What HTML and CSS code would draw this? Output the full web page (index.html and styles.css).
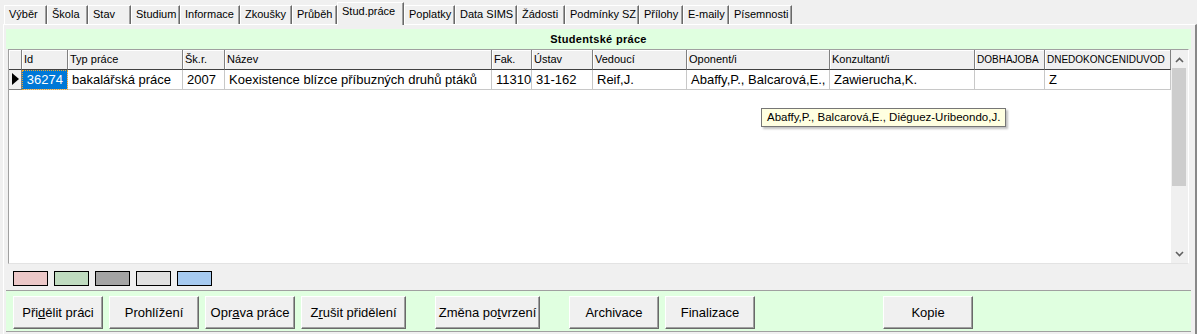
FILE: index.html
```html
<!DOCTYPE html>
<html lang="cs">
<head>
  <meta charset="UTF-8">
  <title>Studentské práce</title>
  <link rel="stylesheet" href="styles.css">
</head>
<body>
  <div class="tabs">
    <div class="tab">Výběr</div>
    <div class="tab">Škola</div>
    <div class="tab">Stav</div>
    <div class="tab">Studium</div>
    <div class="tab">Informace</div>
    <div class="tab">Zkoušky</div>
    <div class="tab">Průběh</div>
    <div class="tab active">Stud.práce</div>
    <div class="tab">Poplatky</div>
    <div class="tab">Data SIMS</div>
    <div class="tab">Žádosti</div>
    <div class="tab">Podmínky SZ</div>
    <div class="tab">Přílohy</div>
    <div class="tab">E-maily</div>
    <div class="tab">Písemnosti</div>
  </div>

  <div class="panel">
    <div class="caption">Studentské práce</div>

    <div class="grid">
      <div class="grid-table">
        <div class="grid-row head">
          <div class="cell ind"></div>
          <div class="cell">Id</div>
          <div class="cell">Typ práce</div>
          <div class="cell">Šk.r.</div>
          <div class="cell">Název</div>
          <div class="cell">Fak.</div>
          <div class="cell">Ústav</div>
          <div class="cell">Vedoucí</div>
          <div class="cell">Oponent/i</div>
          <div class="cell">Konzultant/i</div>
          <div class="cell caps">DOBHAJOBA</div>
          <div class="cell caps">DNEDOKONCENIDUVOD</div>
        </div>
        <div class="grid-row data">
          <div class="cell ind">
            <svg width="7" height="12" viewBox="0 0 7 12"><polygon points="0,0 7,6 0,12" fill="#000"/></svg>
          </div>
          <div class="cell num selected">36274</div>
          <div class="cell">bakalářská práce</div>
          <div class="cell">2007</div>
          <div class="cell">Koexistence blízce příbuzných druhů ptáků</div>
          <div class="cell">11310</div>
          <div class="cell">31-162</div>
          <div class="cell">Reif,J.</div>
          <div class="cell">Abaffy,P., Balcarová,E.,</div>
          <div class="cell">Zawierucha,K.</div>
          <div class="cell"></div>
          <div class="cell">Z</div>
        </div>
      </div>
      <div class="scrollbar">
        <div class="sb-btn">
          <svg width="9" height="6" viewBox="0 0 9 6"><polyline points="1,5 4.5,1.5 8,5" fill="none" stroke="#606060" stroke-width="1.6"/></svg>
        </div>
        <div class="sb-track"><div class="sb-thumb"></div></div>
        <div class="sb-btn down">
          <svg width="9" height="6" viewBox="0 0 9 6"><polyline points="1,1 4.5,4.5 8,1" fill="none" stroke="#606060" stroke-width="1.6"/></svg>
        </div>
      </div>
    </div>

    <div class="legend">
      <span class="swatch pink"></span>
      <span class="swatch green"></span>
      <span class="swatch gray"></span>
      <span class="swatch light"></span>
      <span class="swatch blue"></span>
    </div>

    <div class="actions">
      <button class="btn">Při<u>d</u>ělit práci</button>
      <button class="btn">Prohlížení</button>
      <button class="btn">Opr<u>a</u>va práce</button>
      <button class="btn wide">Z<u>r</u>ušit přidělení</button>
      <button class="btn wide push">Změna po<u>t</u>vrzení</button>
      <button class="btn push">Archivace</button>
      <button class="btn">Finalizace</button>
      <button class="btn push-far">Kopie</button>
    </div>
  </div>

  <div class="tooltip">Abaffy,P., Balcarová,E., Diéguez-Uribeondo,J.</div>
</body>
</html>
```

FILE: styles.css
```css
html, body {
  margin: 0; padding: 0;
  width: 1197px; height: 334px;
  background: #f0f0f0;
  font-family: 'Liberation Sans', Arial, sans-serif;
  color: #000;
  overflow: hidden;
}

/* zalozky */
.tabs {
  display: flex;
  align-items: flex-end;
  height: 24px;
  padding-left: 4px;
  box-sizing: border-box;
  position: relative;
  z-index: 2;
}
.tab {
  height: 19px;
  box-sizing: border-box;
  border-top: 1px solid #fff;
  border-left: 1px solid #fff;
  border-right: 1px solid #696969;
  box-shadow: inset -1px 0 #a0a0a0;
  padding: 1px 0 0 4px;
  font-size: 11px;
  line-height: 15px;
  white-space: nowrap;
  overflow: hidden;
  background: #f0f0f0;
}
.tab:nth-child(1) { width: 43px; }
.tab:nth-child(2) { width: 41px; }
.tab:nth-child(3) { width: 43px; }
.tab:nth-child(4) { width: 49px; }
.tab:nth-child(5) { width: 60px; }
.tab:nth-child(6) { width: 52px; }
.tab:nth-child(7) { width: 45px; }
.tab:nth-child(8) { width: 67px; }
.tab:nth-child(9) { width: 51px; }
.tab:nth-child(10) { width: 62px; }
.tab:nth-child(11) { width: 48px; }
.tab:nth-child(12) { width: 74px; }
.tab:nth-child(13) { width: 44px; }
.tab:nth-child(14) { width: 46px; }
.tab:nth-child(15) { width: 63px; }
.tab.active {
  height: 23px;
  margin-bottom: -1px;
  padding-top: 1px;
}

/* panel */
.panel {
  margin-left: 3px;
  width: 1194px;
  height: 310px;
  box-sizing: border-box;
  border-top: 1px solid #fff;
  border-left: 1px solid #fff;
  border-right: 2px solid #888;
  padding: 4px 4px 0 2px;
  display: flex;
  flex-direction: column;
}
.caption {
  height: 20px;
  background: #e0ffe0;
  text-align: center;
  font-size: 11px;
  font-weight: bold;
  letter-spacing: 0.3px;
  line-height: 20px;
}

/* mrizka */
.grid {
  display: flex;
  height: 215px;
  width: 1181px;
  margin-left: 2px;
  box-sizing: border-box;
  border: 1px solid;
  border-color: #a0a0a0 #fff #e3e3e3 #a0a0a0;
  background: #fff;
}
.grid-table { flex: 0 0 1162px; }
.grid-row {
  display: grid;
  grid-template-columns: 13px 46px 115px 42px 267px 40px 61px 94px 143px 145px 70px 126px;
  height: 20px;
}
.cell {
  box-sizing: border-box;
  white-space: nowrap;
  overflow: hidden;
}
.head .cell {
  background: #f0f0f0;
  box-shadow: inset 1px 1px #fff;
  border-right: 1px solid #808080;
  border-bottom: 1px solid #404040;
  font-size: 11px;
  line-height: 19px;
  padding-left: 2px;
}
.head .cell.caps { font-size: 10px; }
.data .cell {
  border-right: 1px solid #c8c8c8;
  border-bottom: 1px solid #c8c8c8;
  font-size: 13px;
  line-height: 19px;
  padding-left: 4px;
}
.data .cell.ind {
  background: #f0f0f0;
  border-right-color: #808080;
  border-bottom-color: #808080;
  padding: 3px 0 0 3px;
  line-height: 0;
}
.data .cell.num { text-align: right; padding: 0 4px 0 0; }
.data .cell.selected {
  background: #0078d7;
  color: #fff;
  outline: 1px dotted #f5a623;
  outline-offset: -1px;
}

.scrollbar {
  width: 17px;
  display: flex;
  flex-direction: column;
  background: #f0f0f0;
}
.sb-btn {
  height: 17px;
  display: flex;
  align-items: center;
  justify-content: center;
  padding-top: 3px;
  box-sizing: border-box;
}
.sb-btn.down { padding: 0 0 1px 0; }
.sb-track { flex: 1; }
.sb-thumb {
  height: 118px;
  margin: 1px 2px 0 1px;
  background: #cdcdcd;
}

/* legenda */
.legend {
  height: 27px;
  box-sizing: border-box;
  border-bottom: 1px solid #a0a0a0;
  padding: 7px 0 0 7px;
  display: flex;
  gap: 6px;
}
.swatch {
  width: 35px;
  height: 15px;
  box-sizing: border-box;
  border: 1px solid #000;
}
.swatch.pink { background: #ecc8c8; }
.swatch.green { background: #c0dcc0; }
.swatch.gray { background: #a4a4a4; }
.swatch.light { background: #e0e0e0; }
.swatch.blue { background: #a6caf0; }

/* tlacitka */
.actions {
  height: 41px;
  box-sizing: border-box;
  background: #e0ffe0;
  border-bottom: 1px solid #a0a0a0;
  padding: 5px 0 0 7px;
  display: flex;
  align-items: flex-start;
  gap: 6px;
}
.btn {
  width: 90px;
  height: 33px;
  box-sizing: border-box;
  background: #f0f0f0;
  border: 1px solid;
  border-color: #fff #696969 #696969 #fff;
  box-shadow: inset -1px -1px #a0a0a0;
  font-family: 'Liberation Sans', Arial, sans-serif;
  font-size: 13px;
  color: #000;
  padding: 0;
  cursor: pointer;
}
.btn.wide { width: 105px; }
.btn.push { margin-left: 23px; }
.btn.push-far { margin-left: 122px; }

/* bublina */
.tooltip {
  position: absolute;
  left: 761px;
  top: 108px;
  height: 19px;
  box-sizing: border-box;
  padding: 0 5px;
  background: #ffffe1;
  border: 1px solid #767676;
  box-shadow: 2px 2px 2px rgba(0,0,0,0.25);
  font-size: 11.5px;
  line-height: 17px;
  white-space: nowrap;
}
```
